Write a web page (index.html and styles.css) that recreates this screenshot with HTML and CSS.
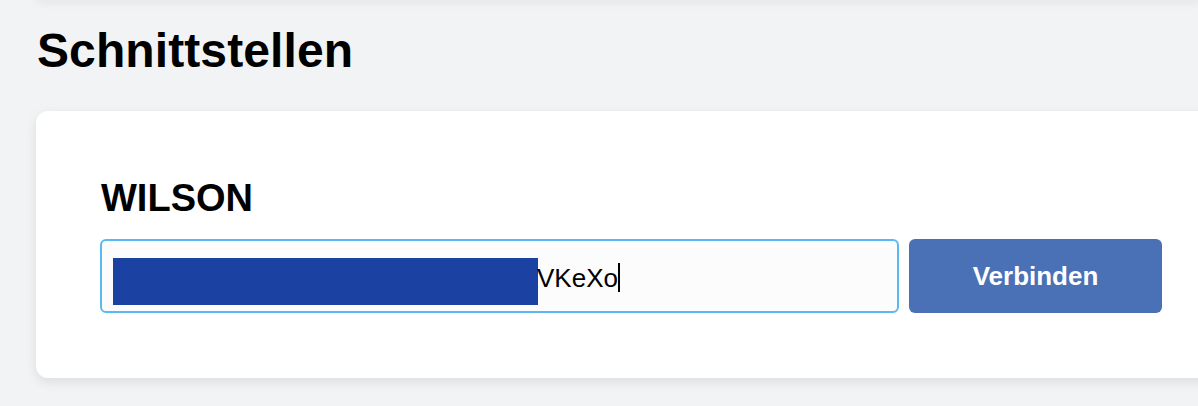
FILE: index.html
```html
<!DOCTYPE html>
<html lang="de">
<head>
<meta charset="utf-8">
<title>Schnittstellen</title>
<link rel="stylesheet" href="styles.css">
</head>
<body>
<div class="topbar"></div>
<main class="page">
  <h1 class="title">Schnittstellen</h1>
  <section class="card">
    <h2 class="card-title">WILSON</h2>
    <div class="row">
      <div class="field">
        <span class="redact"></span><span class="value">VKeXo</span><span class="caret"></span>
      </div>
      <button class="btn" type="button">Verbinden</button>
    </div>
  </section>
</main>
</body>
</html>
```
FILE: styles.css
```css
html, body {
  margin: 0;
  padding: 0;
}
body {
  background: #f2f3f5;
  font-family: "Liberation Sans", Arial, Helvetica, sans-serif;
  color: #000;
  overflow: hidden;
  height: 406px;
}
.topbar {
  height: 0;
  margin-left: 40px;
  box-shadow: 0 0 8px 3px rgba(0, 0, 0, 0.07);
}
.page {
  padding: 27px 0 0 36px;
}
.title {
  margin: 0;
  font-size: 48px;
  line-height: 48px;
  font-weight: 700;
  padding-left: 1px;
  letter-spacing: 0.1px;
}
.card {
  margin-top: 36px;
  margin-right: -20px;
  background: #fff;
  border-radius: 12px;
  box-shadow: 0 4px 12px rgba(0, 0, 0, 0.09);
  padding: 68px 0 65px 64px;
}
.card-title {
  margin: 0 0 22px 1px;
  font-size: 38px;
  line-height: 38px;
  font-weight: 700;
}
.row {
  display: flex;
  gap: 10px;
}
.field {
  box-sizing: border-box;
  width: 799px;
  height: 74px;
  border: 2px solid #5ab8f3;
  border-radius: 6px;
  background: #fcfcfc;
  display: flex;
  align-items: center;
  padding: 0 11px;
}
.redact {
  display: block;
  width: 425px;
  height: 47px;
  background: #1b41a2;
  margin-top: 10px;
}
.value {
  font-size: 26px;
  margin-top: 4px;
  margin-left: -1px;
}
.caret {
  display: block;
  width: 2px;
  height: 29px;
  background: #000;
  margin-top: 2px;
}
.btn {
  box-sizing: border-box;
  width: 253px;
  height: 74px;
  border: 0;
  border-radius: 6px;
  background: #4a70b5;
  color: #fff;
  font-family: "Liberation Sans", Arial, Helvetica, sans-serif;
  font-size: 26px;
  font-weight: 700;
  padding: 0;
}
```
